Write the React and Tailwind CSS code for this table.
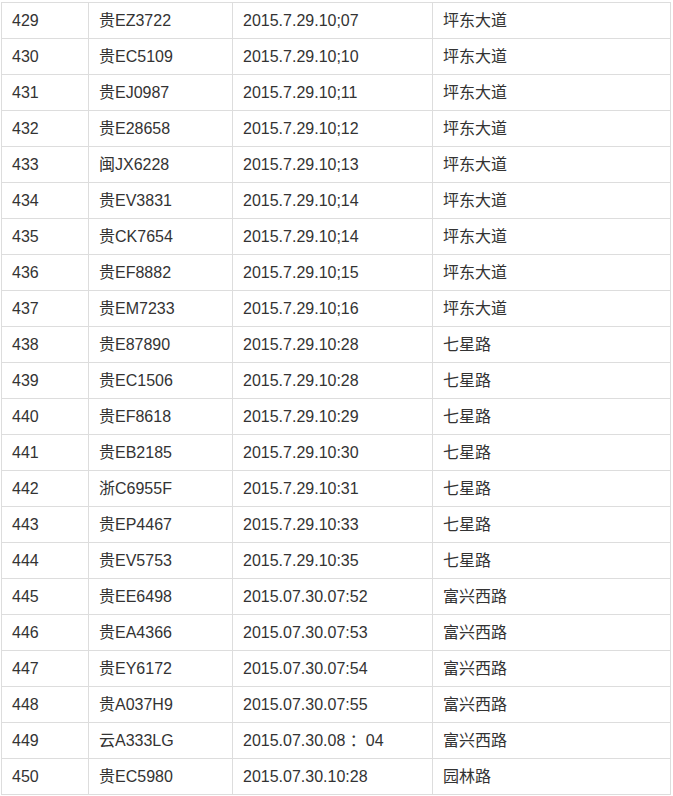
import React from 'react';

const rows = [
  ['429', '贵EZ3722', '2015.7.29.10;07', '坪东大道'],
  ['430', '贵EC5109', '2015.7.29.10;10', '坪东大道'],
  ['431', '贵EJ0987', '2015.7.29.10;11', '坪东大道'],
  ['432', '贵E28658', '2015.7.29.10;12', '坪东大道'],
  ['433', '闽JX6228', '2015.7.29.10;13', '坪东大道'],
  ['434', '贵EV3831', '2015.7.29.10;14', '坪东大道'],
  ['435', '贵CK7654', '2015.7.29.10;14', '坪东大道'],
  ['436', '贵EF8882', '2015.7.29.10;15', '坪东大道'],
  ['437', '贵EM7233', '2015.7.29.10;16', '坪东大道'],
  ['438', '贵E87890', '2015.7.29.10:28', '七星路'],
  ['439', '贵EC1506', '2015.7.29.10:28', '七星路'],
  ['440', '贵EF8618', '2015.7.29.10:29', '七星路'],
  ['441', '贵EB2185', '2015.7.29.10:30', '七星路'],
  ['442', '浙C6955F', '2015.7.29.10:31', '七星路'],
  ['443', '贵EP4467', '2015.7.29.10:33', '七星路'],
  ['444', '贵EV5753', '2015.7.29.10:35', '七星路'],
  ['445', '贵EE6498', '2015.07.30.07:52', '富兴西路'],
  ['446', '贵EA4366', '2015.07.30.07:53', '富兴西路'],
  ['447', '贵EY6172', '2015.07.30.07:54', '富兴西路'],
  ['448', '贵A037H9', '2015.07.30.07:55', '富兴西路'],
  ['449', '云A333LG', '2015.07.30.08\u00a0：04', '富兴西路'],
  ['450', '贵EC5980', '2015.07.30.10:28', '园林路'],
];

export default function App() {
  return (
    <div className="bg-white min-h-screen pl-[1px] pt-[2px] text-[#333] text-[16px] font-['Liberation_Sans','Noto_Sans_CJK_SC',sans-serif]">
      <table className="table-fixed border-collapse w-[669px]">
        <colgroup>
          <col className="w-[87px]" />
          <col className="w-[144px]" />
          <col className="w-[200px]" />
          <col className="w-[238px]" />
        </colgroup>
        <tbody>
          {rows.map((r) => (
            <tr key={r[0]} className="h-[36px]">
              {r.map((c, i) => (
                <td key={i} className="border border-[#dddddd] px-[10px] py-0 leading-[35px] whitespace-nowrap">
                  {c}
                </td>
              ))}
            </tr>
          ))}
        </tbody>
      </table>
    </div>
  );
}
